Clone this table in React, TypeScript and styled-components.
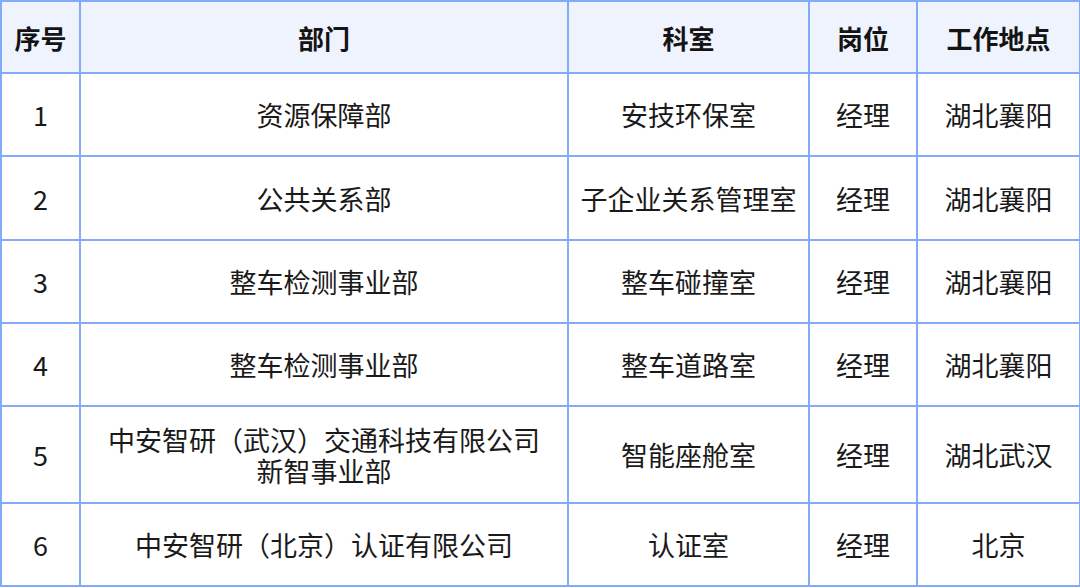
import React from "react";
import styled, { createGlobalStyle } from "styled-components";

const GlobalStyle = createGlobalStyle`
  html, body {
    margin: 0;
    padding: 0;
    background: #ffffff;
  }
  body {
    font-family: "Noto Sans CJK SC", "Noto Sans", sans-serif;
    color: #1a1a1a;
  }
`;

const Table = styled.table`
  width: 1079px;
  border-collapse: collapse;
  table-layout: fixed;
  margin: 0;
  font-size: 27px;
`;

const HeadCell = styled.th`
  height: 70px;
  padding: 0;
  background: #eef3fd;
  border: 2px solid #82abf8;
  font-weight: 700;
  font-size: 26px;
  text-align: center;
  vertical-align: middle;
  color: #141414;
`;

const Cell = styled.td<{ $h: number }>`
  height: ${(p) => p.$h}px;
  padding: 0;
  border: 2px solid #82abf8;
  text-align: center;
  vertical-align: middle;
  line-height: 31px;
  font-weight: 400;
  white-space: nowrap;
`;

const columns = [
  { title: "序号", width: 79 },
  { title: "部门", width: 488 },
  { title: "科室", width: 241 },
  { title: "岗位", width: 108 },
  { title: "工作地点", width: 163 },
];

const rows = [
  { no: "1", dept: ["资源保障部"], office: "安技环保室", post: "经理", place: "湖北襄阳", h: 81 },
  { no: "2", dept: ["公共关系部"], office: "子企业关系管理室", post: "经理", place: "湖北襄阳", h: 82 },
  { no: "3", dept: ["整车检测事业部"], office: "整车碰撞室", post: "经理", place: "湖北襄阳", h: 81 },
  { no: "4", dept: ["整车检测事业部"], office: "整车道路室", post: "经理", place: "湖北襄阳", h: 81 },
  {
    no: "5",
    dept: ["中安智研（武汉）交通科技有限公司", "新智事业部"],
    office: "智能座舱室",
    post: "经理",
    place: "湖北武汉",
    h: 95,
  },
  { no: "6", dept: ["中安智研（北京）认证有限公司"], office: "认证室", post: "经理", place: "北京", h: 81 },
];

const App = () => (
  <>
    <GlobalStyle />
    <Table>
      <colgroup>
        {columns.map((c) => (
          <col key={c.title} style={{ width: c.width }} />
        ))}
      </colgroup>
      <thead>
        <tr>
          {columns.map((c) => (
            <HeadCell key={c.title}>{c.title}</HeadCell>
          ))}
        </tr>
      </thead>
      <tbody>
        {rows.map((r) => (
          <tr key={r.no}>
            <Cell $h={r.h}>{r.no}</Cell>
            <Cell $h={r.h}>
              {r.dept.map((line) => (
                <div key={line}>{line}</div>
              ))}
            </Cell>
            <Cell $h={r.h}>{r.office}</Cell>
            <Cell $h={r.h}>{r.post}</Cell>
            <Cell $h={r.h}>{r.place}</Cell>
          </tr>
        ))}
      </tbody>
    </Table>
  </>
);

export default App;
